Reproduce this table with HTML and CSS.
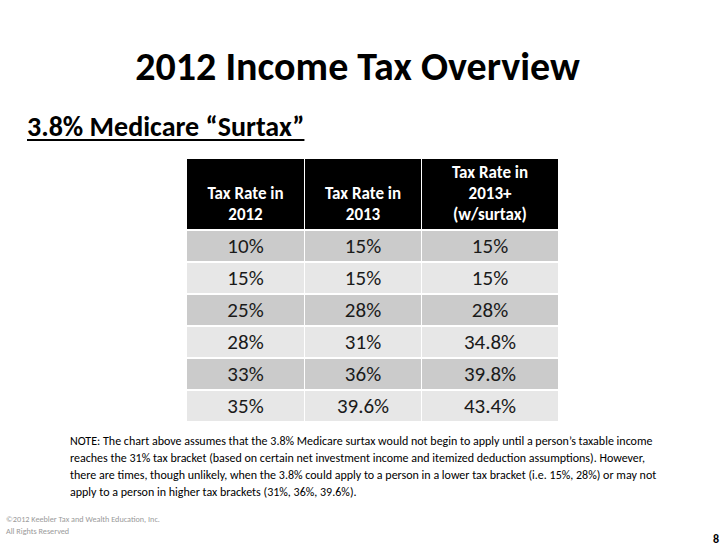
FILE: index.html
```html
<!DOCTYPE html>
<html>
<head>
<meta charset="utf-8">
<link rel="stylesheet" href="styles.css">
</head>
<body>
<div class="slide">
  <h1 class="title">2012 Income Tax Overview</h1>
  <h2 class="subtitle">3.8% Medicare “Surtax”</h2>
  <div class="rates">
    <div class="hd">Tax Rate in<br>2012</div>
    <div class="hd">Tax Rate in<br>2013</div>
    <div class="hd">Tax Rate in<br>2013+<br>(w/surtax)</div>

    <div class="cell dark">10%</div><div class="cell dark">15%</div><div class="cell dark">15%</div>
    <div class="cell light">15%</div><div class="cell light">15%</div><div class="cell light">15%</div>
    <div class="cell dark">25%</div><div class="cell dark">28%</div><div class="cell dark">28%</div>
    <div class="cell light">28%</div><div class="cell light">31%</div><div class="cell light">34.8%</div>
    <div class="cell dark">33%</div><div class="cell dark">36%</div><div class="cell dark">39.8%</div>
    <div class="cell light">35%</div><div class="cell light">39.6%</div><div class="cell light">43.4%</div>
  </div>
  <p class="note">NOTE: The chart above assumes that the 3.8% Medicare surtax would not begin to apply until a person’s taxable income<br>reaches the 31% tax bracket (based on certain net investment income and itemized deduction assumptions). However,<br>there are times, though unlikely, when the 3.8% could apply to a person in a lower tax bracket (i.e. 15%, 28%) or may not<br>apply to a person in higher tax brackets (31%, 36%, 39.6%).</p>
  <div class="foot">
    <div class="copy">©2012 Keebler Tax and Wealth Education, Inc.<br>All Rights Reserved</div>
    <div class="page">8</div>
  </div>
</div>
</body>
</html>
```
FILE: styles.css
```css
* { box-sizing: border-box; }
html, body { margin: 0; padding: 0; background: #fff; }
body { font-family: "Carlito", "Lato", "Liberation Sans", sans-serif; color: #000; }

.slide {
  width: 728px;
  height: 546px;
  display: flex;
  flex-direction: column;
  overflow: hidden;
}

.title {
  margin: 47px 0 0 0;
  padding-right: 13px;
  font-size: 40px;
  line-height: 40px;
  font-weight: bold;
  text-align: center;
}

.subtitle {
  margin: 25px 0 0 27px;
  font-size: 28px;
  line-height: 30px;
  font-weight: bold;
  text-decoration: underline;
  text-decoration-thickness: 2px;
  text-underline-offset: 3px;
  align-self: flex-start;
}

.rates {
  margin: 17px 0 0 187px;
  display: grid;
  grid-template-columns: 117px 116px 136px;
  grid-template-rows: 70px repeat(6, 30px);
  column-gap: 1px;
  row-gap: 2px;
  width: 371px;
}

.hd {
  background: #000;
  color: #fff;
  font-weight: bold;
  font-size: 17px;
  line-height: 21px;
  text-align: center;
  display: flex;
  align-items: flex-end;
  justify-content: center;
  padding-bottom: 4px;
}

.cell {
  font-size: 21px;
  line-height: 30px;
  text-align: center;
  color: #1a1a1a;
}
.dark { background: #cbcbcb; }
.light { background: #e7e7e7; }

.note {
  margin: 12px 0 0 70px;
  font-size: 12px;
  line-height: 17px;
  color: #000;
  white-space: nowrap;
}

.foot {
  margin-top: auto;
  display: flex;
  justify-content: space-between;
  align-items: flex-end;
  padding: 0 9px 0 6px;
}
.copy {
  font-size: 8.2px;
  line-height: 12px;
  color: #9a9a9a;
  margin-bottom: 9px;
}
.page {
  font-size: 12px;
  font-weight: bold;
  line-height: 14px;
}
```
